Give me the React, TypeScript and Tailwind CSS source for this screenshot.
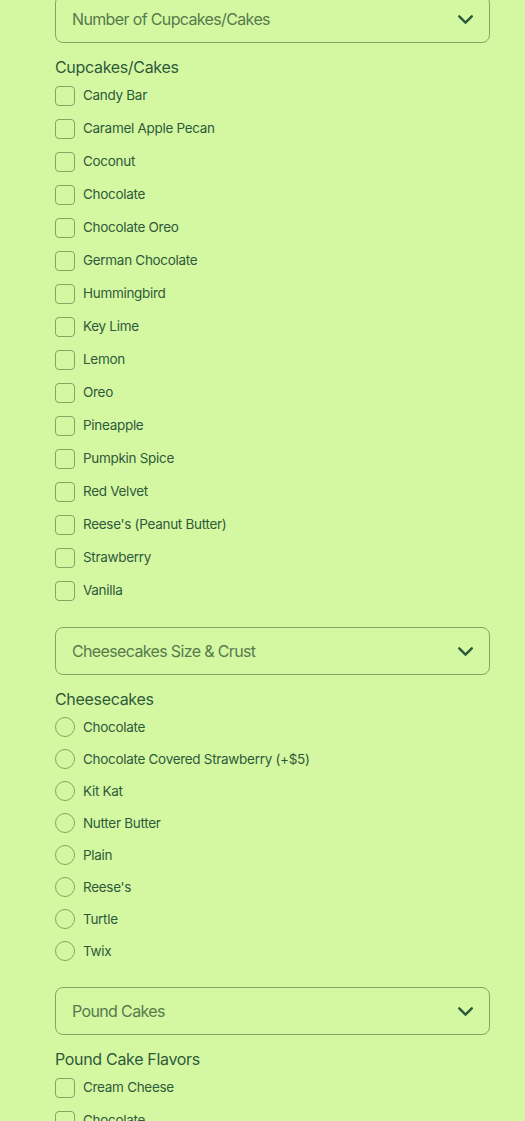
import { ChevronDown } from 'lucide-react';

const cupcakes = [
  'Candy Bar',
  'Caramel Apple Pecan',
  'Coconut',
  'Chocolate',
  'Chocolate Oreo',
  'German Chocolate',
  'Hummingbird',
  'Key Lime',
  'Lemon',
  'Oreo',
  'Pineapple',
  'Pumpkin Spice',
  'Red Velvet',
  "Reese's (Peanut Butter)",
  'Strawberry',
  'Vanilla',
];

const cheesecakes = [
  'Chocolate',
  'Chocolate Covered Strawberry (+$5)',
  'Kit Kat',
  'Nutter Butter',
  'Plain',
  "Reese's",
  'Turtle',
  'Twix',
];

const poundCakes = ['Cream Cheese', 'Chocolate'];

function Select({ label }: { label: string }) {
  return (
    <div className="flex h-[48px] w-full items-center justify-between rounded-[8px] border border-[#84a566] pl-4 pr-[11px]">
      <span className="text-[16px] tracking-[-0.04em] text-[#577a4c]">{label}</span>
      <ChevronDown className="h-[25px] w-[25px] text-[#2c5a3c]" strokeWidth={2.4} />
    </div>
  );
}

function CheckRow({ label }: { label: string }) {
  return (
    <label className="flex h-[33px] items-center gap-[8px]">
      <span className="h-[20px] w-[20px] rounded-[4px] border border-[#84a566]" />
      <span className="text-[13.5px] tracking-[-0.3px] text-[#2f5a3a]">{label}</span>
    </label>
  );
}

function RadioRow({ label }: { label: string }) {
  return (
    <label className="flex h-[32px] items-center gap-[8px]">
      <span className="h-[20px] w-[20px] rounded-full border border-[#84a566]" />
      <span className="text-[13.5px] tracking-[-0.3px] text-[#2f5a3a]">{label}</span>
    </label>
  );
}

function GroupTitle({ children }: { children: string }) {
  return (
    <div className="mt-[12px] h-[24px] text-[16px] leading-[24px] tracking-[-0.02em] text-[#2f5a3a]">
      {children}
    </div>
  );
}

export default function App() {
  return (
    <div
      className="min-h-screen bg-[#d4f8a2] pb-10 pl-[55px] pr-[35px]"
      style={{ fontFamily: 'Inter, "Noto Sans", sans-serif' }}
    >
      <div className="mt-[-5px]">
        <Select label="Number of Cupcakes/Cakes" />
        <GroupTitle>Cupcakes/Cakes</GroupTitle>
        <div className="flex flex-col">
          {cupcakes.map((c) => (
            <CheckRow key={c} label={c} />
          ))}
        </div>
      </div>

      <div className="mt-[20px]">
        <Select label="Cheesecakes Size & Crust" />
        <GroupTitle>Cheesecakes</GroupTitle>
        <div className="flex flex-col">
          {cheesecakes.map((c) => (
            <RadioRow key={c} label={c} />
          ))}
        </div>
      </div>

      <div className="mt-[20px]">
        <Select label="Pound Cakes" />
        <GroupTitle>Pound Cake Flavors</GroupTitle>
        <div className="flex flex-col">
          {poundCakes.map((c) => (
            <CheckRow key={c} label={c} />
          ))}
        </div>
      </div>
    </div>
  );
}
